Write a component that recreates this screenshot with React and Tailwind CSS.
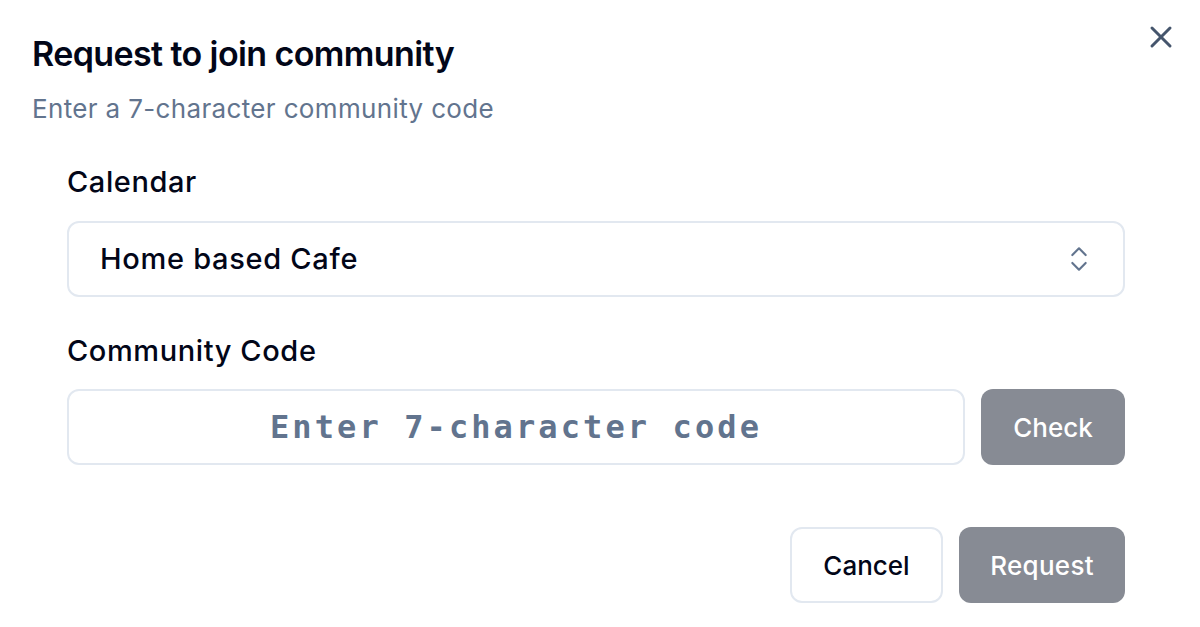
import React from "react";
import { X, ChevronsUpDown } from "lucide-react";

const App = () => {
  return (
    <div
      className="relative w-[1200px] h-[627px] bg-white overflow-hidden"
      style={{ fontFamily: "Inter, 'Liberation Sans', sans-serif" }}
    >
      {/* close */}
      <button className="absolute left-[1143px] top-[19px] text-slate-600">
        <X size={36} strokeWidth={2} />
      </button>

      {/* header */}
      <div className="pt-[34px] px-[32px]">
        <h2 className="text-[34px] leading-[40px] font-semibold tracking-[-0.6px] text-slate-950">
          Request to join community
        </h2>
        <p className="mt-[17px] text-[26px] leading-[36px] tracking-[0.35px] text-slate-500">
          Enter a 7-character community code
        </p>
      </div>

      {/* form */}
      <div className="ml-[67px] w-[1058px] flex flex-col">
        <label className="mt-[37px] text-[29px] leading-[36px] tracking-[0.6px] font-medium text-slate-950">
          Calendar
        </label>
        <div className="mt-[21px] h-[76px] border-2 border-slate-200 rounded-[12px] flex items-center justify-between pl-[31px] pr-[28px]">
          <span className="text-[29px] tracking-[0.7px] font-medium text-slate-950">Home based Cafe</span>
          <ChevronsUpDown size={32} strokeWidth={1.6} className="text-slate-500" />
        </div>

        <label className="mt-[36px] text-[29px] leading-[36px] tracking-[0.6px] font-medium text-slate-950">
          Community Code
        </label>
        <div className="mt-[20px] flex gap-[16px]">
          <div className="w-[898px] h-[76px] border-2 border-slate-200 rounded-[12px] flex items-center justify-center">
            <span
              className="text-[32px] font-bold tracking-[3.1px] text-slate-500"
              style={{ fontFamily: "'DejaVu Sans Mono', 'Liberation Mono', monospace" }}
            >
              Enter 7-character code
            </span>
          </div>
          <button className="w-[144px] h-[76px] rounded-[12px] bg-[#878b94] text-white text-[26px] font-medium">
            Check
          </button>
        </div>

        <div className="mt-[62px] flex justify-end gap-[16px]">
          <button className="w-[153px] h-[76px] rounded-[12px] border-2 border-slate-200 bg-white text-slate-950 text-[26px] font-medium">
            Cancel
          </button>
          <button className="w-[166px] h-[76px] rounded-[12px] bg-[#878b94] text-white text-[26px] font-medium tracking-[0.3px]">
            Request
          </button>
        </div>
      </div>
    </div>
  );
};

export default App;
